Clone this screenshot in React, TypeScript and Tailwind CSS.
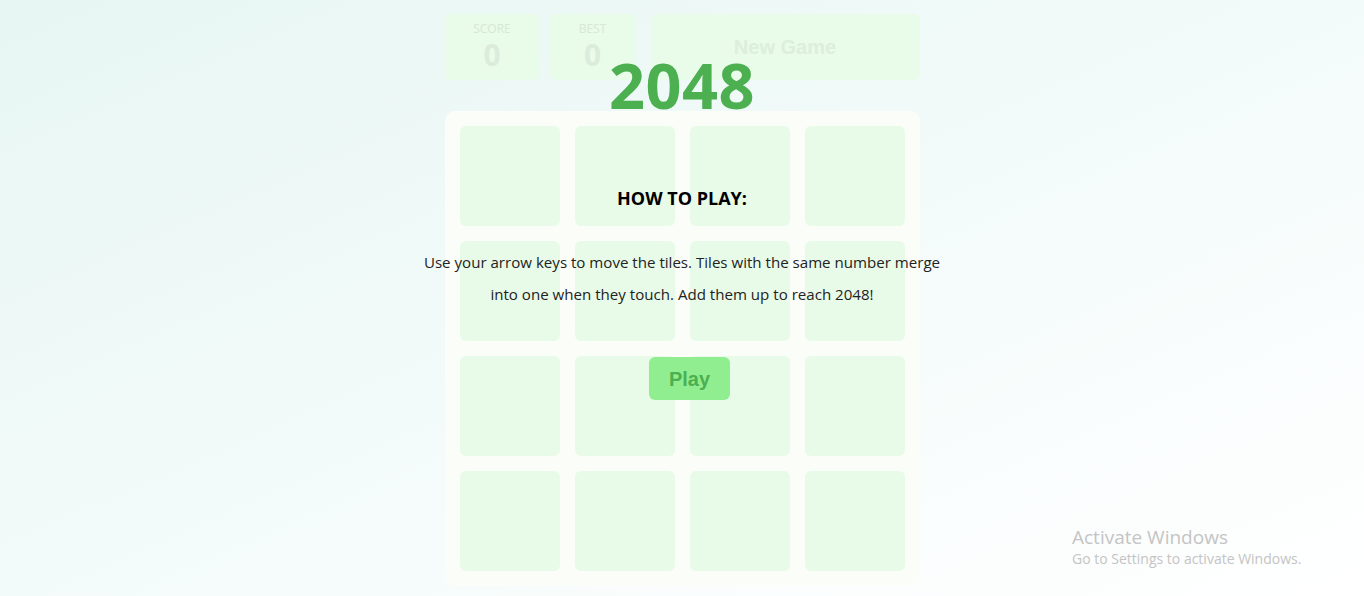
import React from "react";

const tiles = Array.from({ length: 16 }, (_, i) => i);

function StatBox({ label, width }: { label: string; width: string }) {
  return (
    <div className={`${width} h-[66px] rounded-md bg-[#e9fbe9] flex flex-col items-center pt-[7px]`}>
      <div className="text-[12px] leading-4 text-[#d5e9d6] uppercase">{label}</div>
      <div className="text-[30px] leading-[36px] font-bold text-[#dcecdc]">0</div>
    </div>
  );
}

export default function App() {
  return (
    <div
      className="relative w-full h-[596px] overflow-hidden bg-gradient-to-br from-[#e7f6f3] via-[#f3fbfa] to-[#ffffff]"
      style={{ fontFamily: '"Open Sans", "Noto Sans", sans-serif' }}
    >
      {/* faded game behind the overlay */}
      <div className="flex justify-center pt-[14px]">
        <div className="w-[475px] flex flex-col">
          <div className="flex">
            <StatBox label="Score" width="w-[95px]" />
            <div className="w-[10px]" />
            <StatBox label="Best" width="w-[86px]" />
            <button
              className="ml-[15px] flex-1 h-[66px] rounded-md bg-[#e9fbe9] text-[20px] font-bold text-[#dcefdc]"
              style={{ fontFamily: '"Liberation Sans", Arial, sans-serif' }}
            >
              New Game
            </button>
          </div>
          <div className="mt-[31px] h-[475px] rounded-[10px] bg-[#fbfdf9] p-[15px] grid grid-cols-4 gap-[15px]">
            {tiles.map((t) => (
              <div key={t} className="w-[100px] h-[100px] rounded-md bg-[#e8fbe8]" />
            ))}
          </div>
        </div>
      </div>

      {/* how to play overlay */}
      <div className="absolute inset-0 flex flex-col items-center pt-[46px]">
        <h1 className="text-[63px] leading-[78px] font-bold text-[#4caf50] tracking-[0.5px]">2048</h1>
        <h2 className="mt-[62px] text-[18px] leading-6 font-bold text-black">HOW TO PLAY:</h2>
        <p className="mt-[36px] w-[530px] text-center text-[15.1px] leading-[32px] text-[#222]">
          Use your arrow keys to move the tiles. Tiles with the same number merge into one when they touch. Add them up to reach 2048!
        </p>
        <button
          className="mt-[47px] ml-[15px] w-[81px] h-[43px] rounded-md bg-[#90ee90] text-[20px] font-bold text-[#4caf50]"
          style={{ fontFamily: '"Liberation Sans", Arial, sans-serif' }}
        >
          Play
        </button>
      </div>

      {/* windows watermark */}
      <div className="absolute left-[1072px] top-[525px] text-[#c4c4c4]">
        <div className="text-[19px] leading-6">Activate Windows</div>
        <div className="text-[14px] leading-5">Go to Settings to activate Windows.</div>
      </div>
    </div>
  );
}
